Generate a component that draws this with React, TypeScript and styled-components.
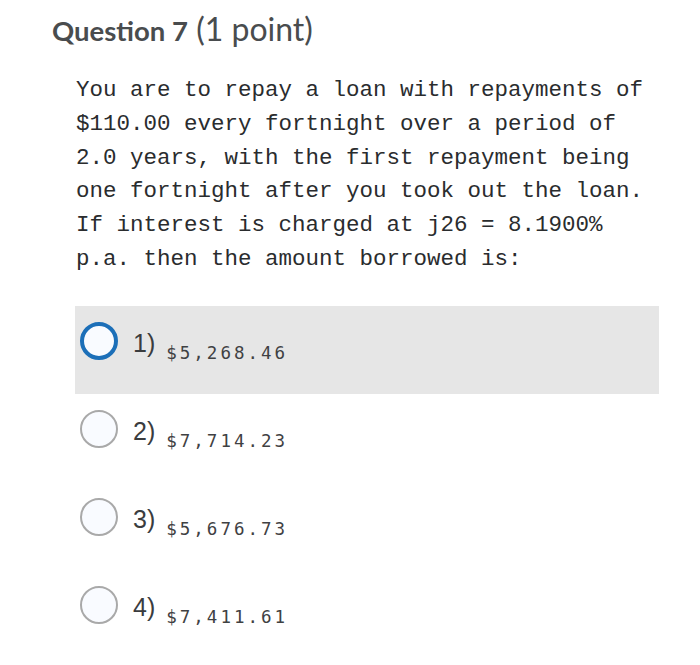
import React from "react";
import styled, { createGlobalStyle } from "styled-components";

const Global = createGlobalStyle`
  html, body { margin: 0; padding: 0; background: #ffffff; }
  body { font-family: "Liberation Sans", Arial, sans-serif; }
`;

const Page = styled.div`
  width: 700px;
  height: 665px;
  box-sizing: border-box;
  padding: 10px 41px 0 52px;
  display: flex;
  flex-direction: column;
`;

const Title = styled.h2`
  margin: 0;
  font-family: Lato, "Open Sans", sans-serif;
  font-size: 32px;
  line-height: 38px;
  font-weight: 400;
  color: #494c4e;
`;

const Strong = styled.span`
  font-weight: 700;
  font-size: 27.5px;
`;

const Prompt = styled.p`
  margin: 24px 0 0 24px;
  font-family: "Liberation Mono", "Courier New", monospace;
  font-size: 22.5px;
  line-height: 33.8px;
  color: #2a2c2e;
  white-space: pre-line;
`;

const Options = styled.div`
  margin: 29px 0 0 23px;
  display: flex;
  flex-direction: column;
`;

const Option = styled.div<{ $active?: boolean }>`
  height: 88px;
  box-sizing: border-box;
  padding: 16px 0 0 5px;
  display: flex;
  align-items: flex-start;
  background: ${(p) => (p.$active ? "#e6e6e6" : "transparent")};
`;

const Radio = styled.span<{ $active?: boolean }>`
  width: 38px;
  height: 38px;
  box-sizing: border-box;
  border-radius: 50%;
  flex: none;
  background: #f9fbff;
  border: ${(p) => (p.$active ? "4px solid #1c6fb8" : "2px solid #a9a9a9")};
`;

const Label = styled.span`
  margin: 7px 0 0 15px;
  font-family: "Liberation Sans", Arial, sans-serif;
  font-size: 25px;
  line-height: 29px;
  color: #3a3c3e;
`;

const Value = styled.span`
  margin: 20px 0 0 11px;
  font-family: "DejaVu Sans Mono", monospace;
  font-size: 17.5px;
  line-height: 22px;
  letter-spacing: 3px;
  color: #3f4143;
`;

const options = [
  { n: "1)", v: "$5,268.46", active: true },
  { n: "2)", v: "$7,714.23" },
  { n: "3)", v: "$5,676.73" },
  { n: "4)", v: "$7,411.61" },
];

export default function App() {
  return (
    <>
      <Global />
      <Page>
        <Title>
          <Strong>Question 7</Strong> (1 point)
        </Title>
        <Prompt>
          {"You are to repay a loan with repayments of\n$110.00 every fortnight over a period of\n2.0 years, with the first repayment being\none fortnight after you took out the loan.\nIf interest is charged at j26 = 8.1900%\np.a. then the amount borrowed is:"}
        </Prompt>
        <Options>
          {options.map((o) => (
            <Option key={o.n} $active={o.active}>
              <Radio $active={o.active} />
              <Label>{o.n}</Label>
              <Value>{o.v}</Value>
            </Option>
          ))}
        </Options>
      </Page>
    </>
  );
}
